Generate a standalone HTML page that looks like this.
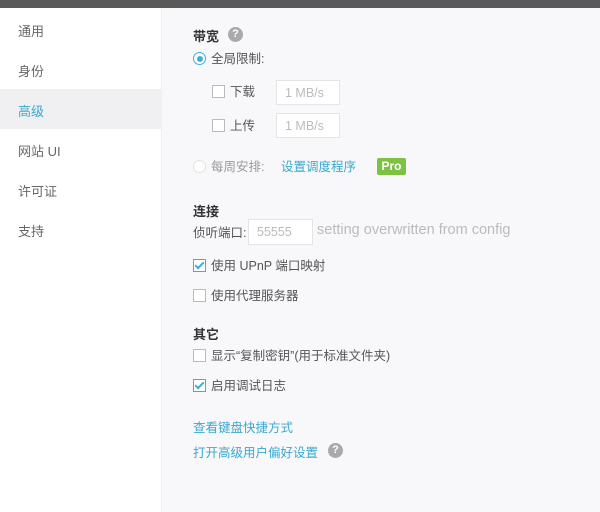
<!DOCTYPE html><html><head><meta charset="utf-8"><style>
*{margin:0;padding:0;box-sizing:border-box}
body{width:600px;height:512px;overflow:hidden;background:#f8f8fa;font-family:"Liberation Sans","Noto Sans CJK SC",sans-serif;font-size:12.5px;color:#555;position:relative}
.top{position:absolute;left:0;top:0;width:600px;height:8px;background:#5a5a5a}
.side{position:absolute;left:0;top:8px;width:162px;height:504px;background:#fff;border-right:1px solid #eee}
.si{position:absolute;left:18px;font-size:13px;color:#666}
.sel{position:absolute;left:0;top:89px;width:162px;height:40px;background:#f0f0f2}
.a{position:absolute;white-space:nowrap}
h{position:absolute;font-weight:bold;color:#333;font-size:13px}
.cb{position:absolute;width:13px;height:13px;border:1px solid #bbb;background:#fff}
.cb.on{border-color:#3db0d8}
.cb.on:after{content:"";position:absolute;left:3px;top:0px;width:3px;height:7px;border:solid #3db0d8;border-width:0 2px 2px 0;transform:rotate(45deg)}
.inp{position:absolute;border:1px solid #e4e4e6;background:#fff;color:#bbb;padding-left:8px;line-height:24px;font-size:12.5px}
.q{position:absolute;width:15px;height:15px;border-radius:8px;background:#aaa;color:#fff;font-size:11px;font-weight:bold;text-align:center;line-height:15px}
.link{color:#3aa8cf}
</style></head><body>
<div class="top"></div>
<div class="side"></div>
<div class="sel"></div>
<div class="si" style="top:21px">通用</div>
<div class="si" style="top:61px">身份</div>
<div class="si" style="top:101px;color:#3aa8cf">高级</div>
<div class="si" style="top:141px">网站 UI</div>
<div class="si" style="top:181px">许可证</div>
<div class="si" style="top:221px">支持</div>

<h style="left:193px;top:26px">带宽</h>
<div class="q" style="left:228px;top:27px">?</div>
<div class="a" style="left:193px;top:52px;width:13px;height:13px;border:1px solid #3db0d8;border-radius:7px;background:#fff"><div style="position:absolute;left:2.5px;top:2.5px;width:6px;height:6px;border-radius:3px;background:#3db0d8"></div></div>
<div class="a" style="left:211px;top:48px">全局限制:</div>
<div class="cb" style="left:212px;top:85px"></div><div class="a" style="left:230px;top:81px">下载</div>
<div class="inp" style="left:276px;top:80px;width:64px;height:25px">1 MB/s</div>
<div class="cb" style="left:212px;top:119px"></div><div class="a" style="left:230px;top:115px">上传</div>
<div class="inp" style="left:276px;top:113px;width:64px;height:25px">1 MB/s</div>
<div class="a" style="left:193px;top:160px;width:13px;height:13px;border:1px solid #e0e0e0;border-radius:7px;background:#fff"></div>
<div class="a" style="left:211px;top:156px;color:#999">每周安排:</div>
<div class="a link" style="left:281px;top:156px">设置调度程序</div>
<div class="a" style="left:377px;top:158px;width:29px;height:17px;background:#7dc242;color:#fff;font-weight:bold;font-size:12px;text-align:center;line-height:17px;border-radius:2px">Pro</div>

<h style="left:193px;top:201px">连接</h>
<div class="a" style="left:193px;top:222px">侦听端口:</div>
<div class="inp" style="left:248px;top:219px;width:65px;height:26px;line-height:24px">55555</div>
<div class="a" style="left:317px;top:222px;color:#bbb;font-size:14.5px">setting overwritten from config</div>
<div class="cb on" style="left:193px;top:259px"></div><div class="a" style="left:211px;top:255px">使用 UPnP 端口映射</div>
<div class="cb" style="left:193px;top:289px"></div><div class="a" style="left:211px;top:285px">使用代理服务器</div>

<h style="left:193px;top:324px">其它</h>
<div class="cb" style="left:193px;top:349px"></div><div class="a" style="left:211px;top:345px">显示“复制密钥”(用于标准文件夹)</div>
<div class="cb on" style="left:193px;top:379px"></div><div class="a" style="left:211px;top:375px">启用调试日志</div>
<div class="a link" style="left:193px;top:417px">查看键盘快捷方式</div>
<div class="a link" style="left:193px;top:442px">打开高级用户偏好设置</div>
<div class="q" style="left:328px;top:443px">?</div>
</body></html>
